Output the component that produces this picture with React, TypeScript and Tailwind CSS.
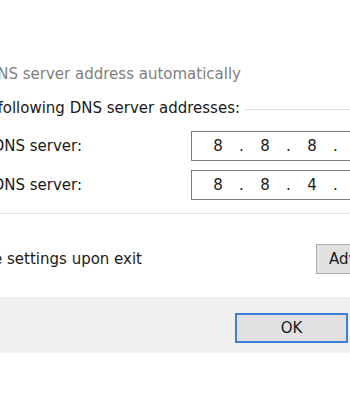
import React from 'react';

const Octets: React.FC<{ ip: string }> = ({ ip }) => {
  const parts = ip.split('.');
  return (
    <div className="flex pl-[6px]">
      {parts.map((p, i) => (
        <div key={i} className="flex w-[47px] shrink-0">
          <span className="w-[40px] text-center">{p}</span>
          {i < parts.length - 1 && <span className="w-[7px] text-center">.</span>}
        </div>
      ))}
    </div>
  );
};

const App: React.FC = () => {
  return (
    <div className="w-[350px] h-[400px] bg-white overflow-hidden flex flex-col text-[15px] text-[#1a1a1a] font-['DejaVu_Sans',sans-serif]">
      <div className="mt-[64px] h-[20px] leading-[20px] flex">
        <div className="w-[241px] shrink-0 flex justify-end whitespace-nowrap text-[#808080]">
          Obtain DNS server address automatically
        </div>
      </div>

      <div className="mt-[14px] h-[20px] leading-[20px] flex items-center">
        <div className="w-[240px] shrink-0 flex justify-end whitespace-nowrap">
          Use the following DNS server addresses:
        </div>
        <div className="flex-1 ml-[5px] mt-[3px] h-px bg-[#dcdcdc]" />
      </div>

      <div className="mt-[13px] h-[30px] flex items-center">
        <div className="w-[82px] shrink-0 flex justify-end whitespace-nowrap">Preferred DNS server:</div>
        <div className="ml-[109px] w-[200px] shrink-0 h-[30px] border border-[#7a7a7a] flex items-center">
          <Octets ip="8.8.8.8" />
        </div>
      </div>

      <div className="mt-[9px] h-[30px] flex items-center">
        <div className="w-[82px] shrink-0 flex justify-end whitespace-nowrap">Alternate DNS server:</div>
        <div className="ml-[109px] w-[200px] shrink-0 h-[30px] border border-[#7a7a7a] flex items-center">
          <Octets ip="8.8.4.4" />
        </div>
      </div>

      <div className="mt-[13px] h-px bg-[#e3e3e3]" />

      <div className="mt-[30px] h-[30px] flex items-center">
        <div className="w-[142px] shrink-0 flex justify-end whitespace-nowrap">Validate settings upon exit</div>
        <button className="ml-[174px] w-[90px] shrink-0 h-[30px] border border-[#adadad] bg-[#e1e1e1] text-left pl-[12px] whitespace-nowrap">
          Advanced...
        </button>
      </div>

      <div className="mt-[23px] h-[56px] bg-[#f0f0f0] flex pt-[16px]">
        <button className="ml-[235px] w-[113px] h-[30px] border-2 border-[#3c7fd7] bg-[#e1e1e1] flex items-center justify-center">
          OK
        </button>
      </div>
    </div>
  );
};

export default App;
